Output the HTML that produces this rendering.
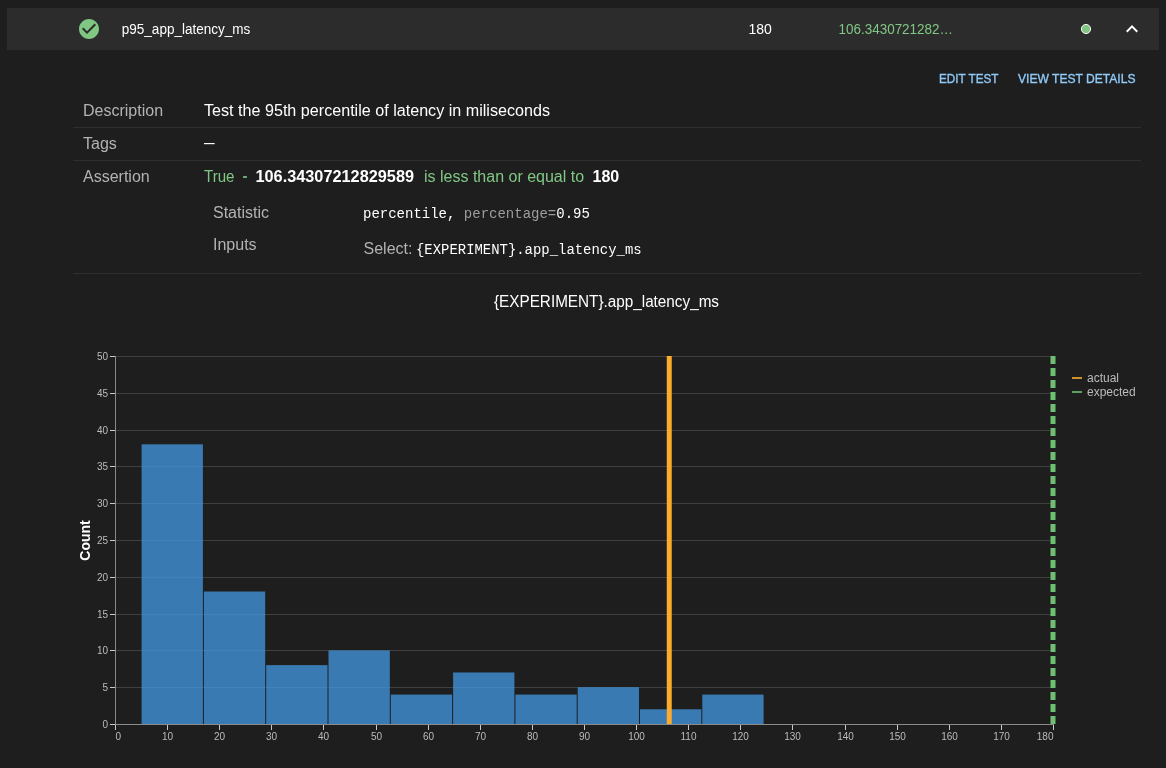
<!DOCTYPE html>
<html><head><meta charset="utf-8"><title>p95_app_latency_ms</title>
<style>
html,body{margin:0;padding:0;background:#1e1e1e;width:1166px;height:768px;overflow:hidden}
svg{display:block;will-change:transform}
</style></head><body>
<svg width="1166" height="768" viewBox="0 0 1166 768">
<rect width="1166" height="768" fill="#1e1e1e"/>
<rect x="7" y="8" width="1152" height="42" fill="#2c2c2c"/>
<path transform="translate(77 17)" d="M12 2C6.48 2 2 6.48 2 12s4.48 10 10 10 10-4.48 10-10S17.52 2 12 2zm-2 15l-5-5 1.41-1.41L10 14.17l7.59-7.59L19 8l-9 9z" fill="#81c784"/>
<text x="121.8" y="34" style="font-family:'Liberation Sans',sans-serif;font-size:14px" fill="#ffffff" textLength="128.5" lengthAdjust="spacingAndGlyphs">p95_app_latency_ms</text>
<text x="748.5" y="34" style="font-family:'Liberation Sans',sans-serif;font-size:14px" fill="#ffffff">180</text>
<text x="838.5" y="34" style="font-family:'Liberation Sans',sans-serif;font-size:14px" fill="#81c784" textLength="114.5" lengthAdjust="spacingAndGlyphs">106.3430721282…</text>
<circle cx="1086" cy="29" r="4.6" fill="#81c784" stroke="#ffffff" stroke-width="1"/>
<path d="M1132 25 l-6 6 1.41 1.41 L1132 27.83 l4.59 4.58 L1138 31z" fill="#ffffff"/>
<text x="939" y="83.3" style="font-family:'Liberation Sans',sans-serif;font-size:13px" fill="#90caf9" stroke="#90caf9" stroke-width="0.35" textLength="59.5" lengthAdjust="spacingAndGlyphs">EDIT TEST</text>
<text x="1018" y="83.3" style="font-family:'Liberation Sans',sans-serif;font-size:13px" fill="#90caf9" stroke="#90caf9" stroke-width="0.35" textLength="117.5" lengthAdjust="spacingAndGlyphs">VIEW TEST DETAILS</text>
<rect x="73" y="127" width="1068" height="1" fill="#2f2f2f"/>
<rect x="73" y="160" width="1068" height="1" fill="#2f2f2f"/>
<rect x="73" y="273" width="1068" height="1" fill="#2f2f2f"/>
<text x="83" y="116" style="font-family:'Liberation Sans',sans-serif;font-size:16px" fill="#b3b3b3">Description</text>
<text x="204" y="116" style="font-family:'Liberation Sans',sans-serif;font-size:16px" fill="#ffffff" textLength="346" lengthAdjust="spacingAndGlyphs">Test the 95th percentile of latency in miliseconds</text>
<text x="83" y="149" style="font-family:'Liberation Sans',sans-serif;font-size:16px" fill="#b3b3b3">Tags</text>
<text x="204" y="148" style="font-family:'Liberation Sans',sans-serif;font-size:16px" fill="#ffffff" textLength="10.6" lengthAdjust="spacingAndGlyphs">—</text>
<text x="83" y="182" style="font-family:'Liberation Sans',sans-serif;font-size:16px" fill="#b3b3b3">Assertion</text>
<text x="204" y="182" style="font-family:'Liberation Sans',sans-serif;font-size:16px" fill="#81c784" textLength="30.5" lengthAdjust="spacingAndGlyphs">True</text>
<rect x="243" y="176.2" width="4" height="1.6" fill="#81c784"/>
<text x="255.5" y="182" style="font-family:'Liberation Sans',sans-serif;font-size:16px;font-weight:700" fill="#ffffff" textLength="158.5" lengthAdjust="spacingAndGlyphs">106.34307212829589</text>
<text x="424" y="182" style="font-family:'Liberation Sans',sans-serif;font-size:16px" fill="#81c784">is less than or equal to</text>
<text x="592.5" y="182" style="font-family:'Liberation Sans',sans-serif;font-size:16px;font-weight:700" fill="#ffffff">180</text>
<text x="213" y="218" style="font-family:'Liberation Sans',sans-serif;font-size:16px" fill="#b3b3b3">Statistic</text>
<text x="213" y="250" style="font-family:'Liberation Sans',sans-serif;font-size:16px" fill="#b3b3b3">Inputs</text>
<text x="363" y="218" style="font-family:'Liberation Mono',monospace;font-size:14px" fill="#ffffff">percentile,<tspan fill="#9c9c9c"> percentage=</tspan>0.95</text>
<text x="363.5" y="254" style="font-family:'Liberation Sans',sans-serif;font-size:16px" fill="#b3b3b3">Select:</text>
<text x="416" y="254" style="font-family:'Liberation Mono',monospace;font-size:14px" fill="#ffffff" textLength="225.6" lengthAdjust="spacingAndGlyphs">{EXPERIMENT}.app_latency_ms</text>
<text x="494" y="307" style="font-family:'Liberation Sans',sans-serif;font-size:16px" fill="#ffffff" textLength="225" lengthAdjust="spacingAndGlyphs">{EXPERIMENT}.app_latency_ms</text>
<line x1="115" x2="1053.5" y1="724.5" y2="724.5" stroke="#3f3f3f" stroke-width="1"/>
<line x1="115" x2="1053.5" y1="687.5" y2="687.5" stroke="#3f3f3f" stroke-width="1"/>
<line x1="115" x2="1053.5" y1="650.5" y2="650.5" stroke="#3f3f3f" stroke-width="1"/>
<line x1="115" x2="1053.5" y1="614.5" y2="614.5" stroke="#3f3f3f" stroke-width="1"/>
<line x1="115" x2="1053.5" y1="577.5" y2="577.5" stroke="#3f3f3f" stroke-width="1"/>
<line x1="115" x2="1053.5" y1="540.5" y2="540.5" stroke="#3f3f3f" stroke-width="1"/>
<line x1="115" x2="1053.5" y1="503.5" y2="503.5" stroke="#3f3f3f" stroke-width="1"/>
<line x1="115" x2="1053.5" y1="466.5" y2="466.5" stroke="#3f3f3f" stroke-width="1"/>
<line x1="115" x2="1053.5" y1="430.5" y2="430.5" stroke="#3f3f3f" stroke-width="1"/>
<line x1="115" x2="1053.5" y1="393.5" y2="393.5" stroke="#3f3f3f" stroke-width="1"/>
<line x1="115" x2="1053.5" y1="356.5" y2="356.5" stroke="#3f3f3f" stroke-width="1"/>
<rect x="141.60" y="444.32" width="61.3" height="279.68" fill="#4295dc" fill-opacity="0.78"/>
<rect x="203.90" y="591.52" width="61.3" height="132.48" fill="#4295dc" fill-opacity="0.78"/>
<rect x="266.20" y="665.12" width="61.3" height="58.88" fill="#4295dc" fill-opacity="0.78"/>
<rect x="328.50" y="650.40" width="61.3" height="73.60" fill="#4295dc" fill-opacity="0.78"/>
<rect x="390.80" y="694.56" width="61.3" height="29.44" fill="#4295dc" fill-opacity="0.78"/>
<rect x="453.10" y="672.48" width="61.3" height="51.52" fill="#4295dc" fill-opacity="0.78"/>
<rect x="515.40" y="694.56" width="61.3" height="29.44" fill="#4295dc" fill-opacity="0.78"/>
<rect x="577.70" y="687.20" width="61.3" height="36.80" fill="#4295dc" fill-opacity="0.78"/>
<rect x="640.00" y="709.28" width="61.3" height="14.72" fill="#4295dc" fill-opacity="0.78"/>
<rect x="702.30" y="694.56" width="61.3" height="29.44" fill="#4295dc" fill-opacity="0.78"/>
<line x1="110" x2="115.5" y1="724.5" y2="724.5" stroke="#c8c8c8" stroke-width="1"/>
<text x="108" y="728.1" text-anchor="end" style="font-family:'Liberation Sans',sans-serif;font-size:10px" fill="#bbbbbb">0</text>
<line x1="110" x2="115.5" y1="687.5" y2="687.5" stroke="#c8c8c8" stroke-width="1"/>
<text x="108" y="691.1" text-anchor="end" style="font-family:'Liberation Sans',sans-serif;font-size:10px" fill="#bbbbbb">5</text>
<line x1="110" x2="115.5" y1="650.5" y2="650.5" stroke="#c8c8c8" stroke-width="1"/>
<text x="108" y="654.1" text-anchor="end" style="font-family:'Liberation Sans',sans-serif;font-size:10px" fill="#bbbbbb">10</text>
<line x1="110" x2="115.5" y1="614.5" y2="614.5" stroke="#c8c8c8" stroke-width="1"/>
<text x="108" y="618.1" text-anchor="end" style="font-family:'Liberation Sans',sans-serif;font-size:10px" fill="#bbbbbb">15</text>
<line x1="110" x2="115.5" y1="577.5" y2="577.5" stroke="#c8c8c8" stroke-width="1"/>
<text x="108" y="581.1" text-anchor="end" style="font-family:'Liberation Sans',sans-serif;font-size:10px" fill="#bbbbbb">20</text>
<line x1="110" x2="115.5" y1="540.5" y2="540.5" stroke="#c8c8c8" stroke-width="1"/>
<text x="108" y="544.1" text-anchor="end" style="font-family:'Liberation Sans',sans-serif;font-size:10px" fill="#bbbbbb">25</text>
<line x1="110" x2="115.5" y1="503.5" y2="503.5" stroke="#c8c8c8" stroke-width="1"/>
<text x="108" y="507.1" text-anchor="end" style="font-family:'Liberation Sans',sans-serif;font-size:10px" fill="#bbbbbb">30</text>
<line x1="110" x2="115.5" y1="466.5" y2="466.5" stroke="#c8c8c8" stroke-width="1"/>
<text x="108" y="470.1" text-anchor="end" style="font-family:'Liberation Sans',sans-serif;font-size:10px" fill="#bbbbbb">35</text>
<line x1="110" x2="115.5" y1="430.5" y2="430.5" stroke="#c8c8c8" stroke-width="1"/>
<text x="108" y="434.1" text-anchor="end" style="font-family:'Liberation Sans',sans-serif;font-size:10px" fill="#bbbbbb">40</text>
<line x1="110" x2="115.5" y1="393.5" y2="393.5" stroke="#c8c8c8" stroke-width="1"/>
<text x="108" y="397.1" text-anchor="end" style="font-family:'Liberation Sans',sans-serif;font-size:10px" fill="#bbbbbb">45</text>
<line x1="110" x2="115.5" y1="356.5" y2="356.5" stroke="#c8c8c8" stroke-width="1"/>
<text x="108" y="360.1" text-anchor="end" style="font-family:'Liberation Sans',sans-serif;font-size:10px" fill="#bbbbbb">50</text>
<line x1="115.5" x2="115.5" y1="724.5" y2="730" stroke="#c8c8c8" stroke-width="1"/>
<text x="115.5" y="740" text-anchor="start" style="font-family:'Liberation Sans',sans-serif;font-size:10px" fill="#bbbbbb">0</text>
<line x1="167.5" x2="167.5" y1="724.5" y2="730" stroke="#c8c8c8" stroke-width="1"/>
<text x="167.5" y="740" text-anchor="middle" style="font-family:'Liberation Sans',sans-serif;font-size:10px" fill="#bbbbbb">10</text>
<line x1="219.5" x2="219.5" y1="724.5" y2="730" stroke="#c8c8c8" stroke-width="1"/>
<text x="219.5" y="740" text-anchor="middle" style="font-family:'Liberation Sans',sans-serif;font-size:10px" fill="#bbbbbb">20</text>
<line x1="271.5" x2="271.5" y1="724.5" y2="730" stroke="#c8c8c8" stroke-width="1"/>
<text x="271.5" y="740" text-anchor="middle" style="font-family:'Liberation Sans',sans-serif;font-size:10px" fill="#bbbbbb">30</text>
<line x1="323.5" x2="323.5" y1="724.5" y2="730" stroke="#c8c8c8" stroke-width="1"/>
<text x="323.5" y="740" text-anchor="middle" style="font-family:'Liberation Sans',sans-serif;font-size:10px" fill="#bbbbbb">40</text>
<line x1="376.5" x2="376.5" y1="724.5" y2="730" stroke="#c8c8c8" stroke-width="1"/>
<text x="376.5" y="740" text-anchor="middle" style="font-family:'Liberation Sans',sans-serif;font-size:10px" fill="#bbbbbb">50</text>
<line x1="428.5" x2="428.5" y1="724.5" y2="730" stroke="#c8c8c8" stroke-width="1"/>
<text x="428.5" y="740" text-anchor="middle" style="font-family:'Liberation Sans',sans-serif;font-size:10px" fill="#bbbbbb">60</text>
<line x1="480.5" x2="480.5" y1="724.5" y2="730" stroke="#c8c8c8" stroke-width="1"/>
<text x="480.5" y="740" text-anchor="middle" style="font-family:'Liberation Sans',sans-serif;font-size:10px" fill="#bbbbbb">70</text>
<line x1="532.5" x2="532.5" y1="724.5" y2="730" stroke="#c8c8c8" stroke-width="1"/>
<text x="532.5" y="740" text-anchor="middle" style="font-family:'Liberation Sans',sans-serif;font-size:10px" fill="#bbbbbb">80</text>
<line x1="584.5" x2="584.5" y1="724.5" y2="730" stroke="#c8c8c8" stroke-width="1"/>
<text x="584.5" y="740" text-anchor="middle" style="font-family:'Liberation Sans',sans-serif;font-size:10px" fill="#bbbbbb">90</text>
<line x1="636.5" x2="636.5" y1="724.5" y2="730" stroke="#c8c8c8" stroke-width="1"/>
<text x="636.5" y="740" text-anchor="middle" style="font-family:'Liberation Sans',sans-serif;font-size:10px" fill="#bbbbbb">100</text>
<line x1="688.5" x2="688.5" y1="724.5" y2="730" stroke="#c8c8c8" stroke-width="1"/>
<text x="688.5" y="740" text-anchor="middle" style="font-family:'Liberation Sans',sans-serif;font-size:10px" fill="#bbbbbb">110</text>
<line x1="740.5" x2="740.5" y1="724.5" y2="730" stroke="#c8c8c8" stroke-width="1"/>
<text x="740.5" y="740" text-anchor="middle" style="font-family:'Liberation Sans',sans-serif;font-size:10px" fill="#bbbbbb">120</text>
<line x1="792.5" x2="792.5" y1="724.5" y2="730" stroke="#c8c8c8" stroke-width="1"/>
<text x="792.5" y="740" text-anchor="middle" style="font-family:'Liberation Sans',sans-serif;font-size:10px" fill="#bbbbbb">130</text>
<line x1="845.5" x2="845.5" y1="724.5" y2="730" stroke="#c8c8c8" stroke-width="1"/>
<text x="845.5" y="740" text-anchor="middle" style="font-family:'Liberation Sans',sans-serif;font-size:10px" fill="#bbbbbb">140</text>
<line x1="897.5" x2="897.5" y1="724.5" y2="730" stroke="#c8c8c8" stroke-width="1"/>
<text x="897.5" y="740" text-anchor="middle" style="font-family:'Liberation Sans',sans-serif;font-size:10px" fill="#bbbbbb">150</text>
<line x1="949.5" x2="949.5" y1="724.5" y2="730" stroke="#c8c8c8" stroke-width="1"/>
<text x="949.5" y="740" text-anchor="middle" style="font-family:'Liberation Sans',sans-serif;font-size:10px" fill="#bbbbbb">160</text>
<line x1="1001.5" x2="1001.5" y1="724.5" y2="730" stroke="#c8c8c8" stroke-width="1"/>
<text x="1001.5" y="740" text-anchor="middle" style="font-family:'Liberation Sans',sans-serif;font-size:10px" fill="#bbbbbb">170</text>
<line x1="1053.5" x2="1053.5" y1="724.5" y2="730" stroke="#c8c8c8" stroke-width="1"/>
<text x="1053.5" y="740" text-anchor="end" style="font-family:'Liberation Sans',sans-serif;font-size:10px" fill="#bbbbbb">180</text>
<line x1="115.5" x2="115.5" y1="356" y2="725" stroke="#8a8a8a" stroke-width="1"/>
<line x1="115" x2="1053.5" y1="724.5" y2="724.5" stroke="#8a8a8a" stroke-width="1"/>
<text transform="translate(90.2 540.5) rotate(-90)" text-anchor="middle" style="font-family:'Liberation Sans',sans-serif;font-size:14px;font-weight:700" fill="#ffffff">Count</text>
<line x1="669.25" x2="669.25" y1="356" y2="724" stroke="#fdab2a" stroke-width="5"/>
<line x1="1053" x2="1053" y1="356" y2="724" stroke="#6cc070" stroke-width="5" stroke-dasharray="8 4"/>
<line x1="1072" x2="1082" y1="378" y2="378" stroke="#fdab2a" stroke-width="2" stroke-opacity="0.8"/>
<line x1="1072" x2="1082" y1="392" y2="392" stroke="#6cc070" stroke-width="2" stroke-opacity="0.8"/>
<text x="1087" y="382" style="font-family:'Liberation Sans',sans-serif;font-size:12px" fill="#bbbbbb">actual</text>
<text x="1087" y="396" style="font-family:'Liberation Sans',sans-serif;font-size:12px" fill="#bbbbbb">expected</text>
</svg>
</body></html>
